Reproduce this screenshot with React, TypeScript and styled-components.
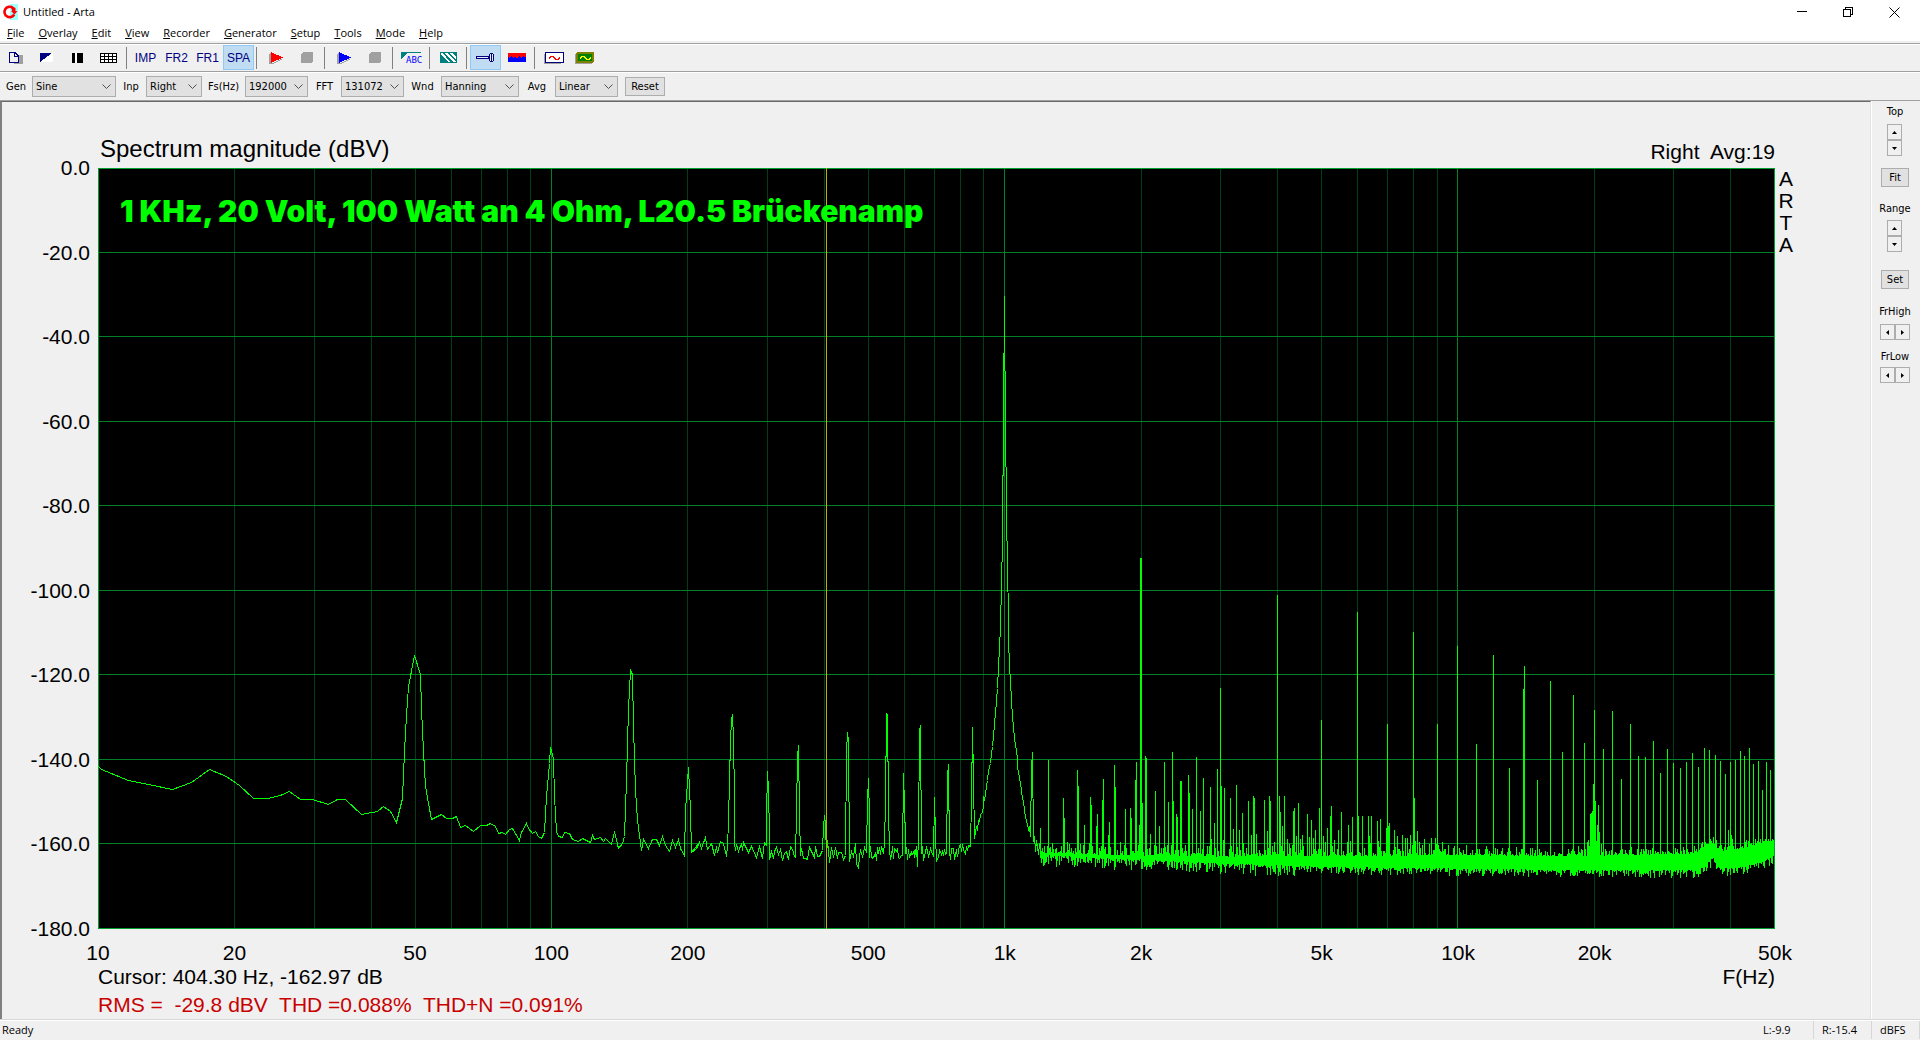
import React from "react";
import styled, { createGlobalStyle } from "styled-components";

const UI = `"Open Sans", "Noto Sans", sans-serif`;
const DIALOG = `"DejaVu Sans Condensed", "DejaVu Sans", sans-serif`;
const PLOT = `"Liberation Sans", Arial, sans-serif`;

const Global = createGlobalStyle`
  *, *::before, *::after { box-sizing: border-box; }
  body { margin: 0; background: #f0f0f0; color: #000; font-family: ${UI}; }
  button, select { font: inherit; color: inherit; margin: 0; padding: 0; }
`;

/* ---------- spectrum data ---------- */

const PLOT_W = 1677;
const PLOT_H = 761;
const DECADES = Math.log10(5000);

type Pt = [number, number];

/* Each range is stored on its own sample grid: origin in plot units, samples per unit. */
const toPlot = (origin: number, perUnit: number) => ([x, y]: Pt): Pt => [
  Math.floor(origin + x / perUnit) + 0.5,
  Math.floor(452 + y / 3) + 0.5,
];

const LOW: Pt[] = [
  [22, 440], [30, 448], [100, 481], [150, 494], [212, 508], [262, 487], [308, 448], [350, 468], [384, 496],
  [420, 535], [456, 535], [490, 525], [512, 514], [540, 538], [572, 538], [612, 553], [637, 538], [657, 538],
  [698, 583], [738, 574], [755, 559], [771, 573], [787, 607], [803, 535], [808, 395], [813, 285], [818, 200],
  [834, 106], [849, 162], [853, 265], [857, 395], [862, 500], [870, 550], [878, 598], [903, 583], [917, 596],
  [932, 596], [942, 589], [953, 622], [965, 616], [985, 635], [1003, 616], [1018, 616], [1029, 610],
  [1041, 620], [1050, 640], [1060, 637], [1069, 643], [1078, 628], [1086, 625], [1104, 661], [1110, 637],
  [1121, 610], [1128, 625], [1136, 640], [1146, 635], [1153, 649], [1161, 655], [1168, 637], [1174, 530],
  [1180, 430], [1184, 382], [1191, 415], [1195, 530], [1199, 635], [1205, 648], [1214, 653], [1219, 637],
  [1232, 640], [1241, 658], [1256, 664], [1267, 655], [1286, 668], [1291, 646], [1297, 658], [1312, 652],
  [1320, 664], [1326, 655], [1339, 674], [1344, 660], [1348, 634], [1358, 685], [1368, 670], [1374, 648],
  [1379, 480], [1384, 265], [1389, 150], [1394, 162], [1398, 320], [1402, 510], [1407, 600], [1412, 645],
  [1417, 691], [1423, 658], [1436, 685], [1446, 658], [1457, 658], [1464, 676], [1471, 649], [1480, 676],
  [1489, 694], [1497, 661], [1505, 682], [1512, 658], [1518, 685], [1528, 706], [1531, 572], [1537, 442],
  [1542, 570], [1547, 697], [1558, 686], [1567, 667],
];

const MID: Pt[][] = [
  [[5, 697], [16, 686], [24, 668], [31, 686], [40, 652], [45, 687], [56, 670], [64, 706], [69, 680], [71, 697],
    [80, 665], [88, 670], [95, 710], [99, 680], [101, 603], [104, 480], [107, 365], [109, 297], [111, 282],
    [113, 355], [115, 530], [117, 667], [120, 692], [122, 673], [127, 694], [134, 670], [137, 690], [140, 668],
    [152, 697], [161, 680], [173, 712], [182, 680], [190, 716], [194, 668], [200, 676], [201, 588], [203, 453],
    [205, 510], [207, 642], [208, 718]],
  [[276, 712], [279, 573], [281, 408], [284, 375], [286, 585], [288, 706]],
  [[346, 690], [349, 620], [352, 585], [354, 612], [357, 705], [360, 660], [365, 728]],
  [[406, 706], [409, 394], [411, 336], [414, 360], [417, 725]],
  [[432, 670], [436, 730], [440, 746], [444, 705]],
  [[461, 697], [464, 537], [466, 474], [468, 588], [469, 713]],
  [[509, 670], [512, 543], [514, 279], [516, 285], [518, 560], [520, 703]],
  [[556, 706], [559, 460], [562, 655], [564, 700]],
  [[594, 740], [598, 642], [600, 333], [603, 315], [605, 700]],
  [[636, 710], [639, 531], [641, 645], [643, 724]],
  [[671, 700], [674, 468], [675, 432], [677, 706]],
  [[733, 678], [736, 540], [738, 321], [740, 478], [743, 655], [748, 620], [751, 632], [755, 600], [757, 604],
    [760, 582], [763, 578], [766, 560], [768, 530], [770, 540], [775, 500], [778, 480], [781, 450], [785, 430],
    [788, 400], [791, 378], [793, 350], [796, 310], [798, 280], [801, 242], [803, 205], [806, 140], [809, 84],
    [811, 15], [814, -105], [817, -240], [819, -620], [821, -970], [823, -896], [826, -321], [829, -156],
    [831, -15], [833, 57], [836, 135], [838, 183], [841, 240], [843, 288], [846, 320], [849, 357], [852, 390],
    [855, 415], [857, 443], [860, 472], [863, 490], [866, 512], [868, 535], [871, 545], [873, 570], [877, 592],
    [880, 600], [884, 628], [887, 618], [890, 648], [892, 444], [894, 398], [897, 664], [899, 650], [903, 694],
    [906, 660], [910, 704], [914, 670], [918, 700]],
];

const SPIKES_A: Pt[] = [
  [916, 625], [937, 422], [976, 534], [978, 594], [1013, 450], [1015, 498], [1031, 615], [1047, 531],
  [1049, 555], [1063, 620], [1065, 582], [1078, 540], [1080, 477], [1094, 645], [1096, 606], [1109, 435],
  [1111, 501],
];

const SPIKES_B: Pt[] = [
  [1, 667], [16, 567], [31, 564], [34, 594], [46, 480], [49, 426], [55, 675], [58, 615], [61, -186], [64, -186],
  [67, 549], [76, 408], [79, 414], [91, 642], [106, 513], [109, 678], [118, 618], [133, 426], [136, 681],
  [145, 546], [157, 396], [160, 543], [169, 582], [172, 591], [181, 483], [184, 483], [205, 465], [208, 519],
  [217, 567], [229, 411], [241, 573], [250, 474], [262, 678], [271, 501], [274, 657], [283, 609], [292, 447],
  [301, 204], [304, 498], [310, 660], [313, 504], [331, 534], [334, 678], [340, 627], [349, 495], [358, 630],
  [367, 579], [370, 669], [385, 543], [394, 645], [400, 528], [403, 534], [409, 642], [433, 540], [442, 633],
  [448, 528], [451, 543], [457, 678], [463, 666], [472, -75], [478, 528], [481, 576], [487, 618], [493, 528],
  [502, 657], [508, 672], [520, 573], [523, 564], [529, 648], [535, 549], [541, 657], [547, 645], [550, 678],
  [562, 582], [568, 651], [574, 600], [580, 654], [586, 630], [598, 564], [604, 300], [610, 648], [616, 666],
  [622, 624], [631, 588], [634, 558], [637, 678], [643, 660], [655, 630], [664, 576], [682, 666], [685, 615],
  [691, 663], [697, 591], [712, -24], [715, 588], [727, 588], [745, 588], [748, 648], [751, 669], [754, 588],
  [772, 603], [775, 663], [778, 681], [781, 597], [799, 624], [802, 312], [805, 618], [808, 609], [823, 630],
  [826, 681], [832, 648], [847, 645], [856, 654], [862, 654], [871, 645], [877, 675], [880, 36], [883, 534],
  [886, 663], [892, 633], [898, 666], [907, 675], [913, 657], [928, 672], [934, 654], [946, 654], [949, 672],
  [952, 312], [955, 675], [967, 666], [985, 675], [1003, 678],
];

const SPIKES_C: Pt[] = [
  [22, 78], [49, 675], [79, 372], [109, 678], [130, 105], [178, 444], [199, 681], [220, 207], [223, 138],
  [262, 480], [301, 183], [337, 396], [370, 225], [385, 678], [403, 369], [412, 668], [415, 660], [418, 678],
  [421, 582], [424, 579], [427, 573], [430, 492], [433, 270], [436, 543], [439, 665], [442, 615], [445, 555],
  [448, 636], [454, 672], [460, 387], [487, 273], [514, 477], [541, 312], [565, 408], [586, 411], [610, 363],
  [631, 459], [652, 387], [670, 429], [691, 444], [709, 426], [727, 399], [745, 441], [763, 384], [778, 390],
  [796, 405], [811, 423], [826, 462], [835, 630], [841, 426], [844, 645], [847, 657], [856, 422], [871, 393],
  [883, 408], [898, 384], [910, 432], [925, 423], [937, 510], [949, 426], [961, 450],
];

/* Noise floor envelope: plot x, upper edge, lower edge. */
const FLOOR: [number, number, number][] = [
  [943, 694, 704], [1000, 700, 714], [1060, 704, 720], [1122, 706, 730], [1222, 705, 740], [1352, 702, 745],
  [1480, 704, 750], [1590, 698, 750], [1599, 694, 750], [1607, 674, 735], [1612, 664, 720], [1615, 664, 713],
  [1618, 676, 725], [1622, 688, 743], [1639, 686, 744], [1662, 668, 728], [1676, 656, 706],
];

function makeRandom(seed: number) {
  let s = seed;
  return () => {
    s = (s * 1664525 + 1013904223) % 4294967296;
    return s / 4294967296;
  };
}

function buildLine(): string {
  const rnd = makeRandom(77);
  const pts: Pt[] = LOW.map(toPlot(-8, 2.57));
  const mid = toPlot(592, 2.613);
  let x = 0;
  let up = false;
  MID.forEach((group) => {
    const step = x < 420 ? 4 : 2;
    for (x += step; x < group[0][0] - 2; x += step + rnd() * 2) {
      const centre = x > 690 ? 700 - (x - 690) / 2 : 700;
      up = rnd() > 0.25 ? !up : up;
      pts.push(mid([x, centre + (up ? -1 : 1) * rnd() * 22]));
    }
    group.forEach((p) => pts.push(mid(p)));
    x = group[group.length - 1][0];
  });
  return pts.map((p) => p.join(",")).join(" ");
}

function buildColumns(): string {
  const rnd = makeRandom(2024);
  const out: string[] = [];
  let k = 0;
  for (let x = 943; x < PLOT_W - 1; x++) {
    while (k < FLOOR.length - 2 && x > FLOOR[k + 1][0]) k++;
    const [x0, t0, b0] = FLOOR[k];
    const [x1, t1, b1] = FLOOR[k + 1];
    const f = (x - x0) / (x1 - x0);
    const spread = x < 1200 ? 34 : 24;
    const top = t0 + (t1 - t0) * f + 4 - Math.pow(rnd(), 2) * spread;
    const bottom = b0 + (b1 - b0) * f + Math.pow(rnd(), 2) * spread;
    out.push(`M${x + 0.5} ${Math.round(452 + top / 3)}V${Math.round(452 + bottom / 3)}`);
  }
  const spike = (origin: number, perUnit: number) => (p: Pt) => {
    const [sx, sy] = toPlot(origin, perUnit)(p);
    out.push(`M${sx} ${sy - 0.5}V690`);
  };
  SPIKES_A.forEach(spike(592, 2.613));
  SPIKES_B.forEach(spike(1022, 3));
  SPIKES_C.forEach(spike(1352, 3));
  return out.join("");
}

const LINE = buildLine();
const COLUMNS = buildColumns();

const freqX = (f: number) => Math.round((Math.log10(f / 10) / DECADES) * (PLOT_W - 1)) + 0.5;
const MAJOR_V = [100, 1000, 10000];
const MINOR_V = [10, 100, 1000, 10000]
  .flatMap((d) => [2, 3, 4, 5, 6, 7, 8, 9].map((m) => d * m))
  .filter((f) => f < 50000);
const LEVELS = [0, -20, -40, -60, -80, -100, -120, -140, -160, -180];
const levelY = (db: number) => Math.floor((-db / 180) * (PLOT_H - 1)) + 0.5;
const TICKS: [number, string][] = [
  [10, "10"], [20, "20"], [50, "50"], [100, "100"], [200, "200"], [500, "500"], [1000, "1k"], [2000, "2k"],
  [5000, "5k"], [10000, "10k"], [20000, "20k"], [50000, "50k"],
];

/* ---------- window frame ---------- */

const Window = styled.div`
  display: flex;
  flex-direction: column;
  min-height: 100vh;
  font-size: 11px;
`;

const TitleBar = styled.header`
  display: flex;
  align-items: center;
  height: 24px;
  padding: 0 3px 0 2px;
  background: #fff;
`;

const TitleText = styled.h1`
  flex: 1;
  margin: 0 0 0 5px;
  font-size: 11px;
  font-weight: 400;
  line-height: 16px;
`;

const WindowButton = styled.button`
  display: grid;
  place-items: center;
  width: 46px;
  height: 20px;
  border: 0;
  background: none;
`;

const MenuBar = styled.nav`
  display: flex;
  height: 19px;
  background: #fff;
  border-bottom: 2px solid #f0f0f0;
`;

const MenuItem = styled.button`
  padding: 0 7px;
  border: 0;
  background: none;
  line-height: 17px;
`;

const Bar = styled.div`
  display: flex;
  align-items: center;
  height: 28px;
  border-top: 1px solid #a0a0a0;
  box-shadow: inset 0 1px 0 #fff;
`;

const ToolButton = styled.button<{ $on?: boolean }>`
  display: grid;
  place-items: center;
  width: 31px;
  height: 25px;
  border: 1px solid ${(p) => (p.$on ? "#90c8f6" : "transparent")};
  background: ${(p) => (p.$on ? "#c0dcf3" : "transparent")};
  color: #000080;
  font-family: ${PLOT};
  font-size: 12px;
`;

const Divider = styled.span`
  width: 2px;
  height: 22px;
  margin: 0 2px;
  border-left: 1px solid #808080;
`;

const SettingsBar = styled(Bar)`
  height: 29px;
  padding-top: 1px;
  font-family: ${DIALOG};
`;

const FieldLabel = styled.label<{ $width: number }>`
  width: ${(p) => p.$width}px;
  text-align: center;
`;

const SelectBox = styled.span<{ $width: number }>`
  display: grid;
  align-items: center;
  width: ${(p) => p.$width}px;
  height: 21px;
  border: 1px solid #adadad;
  background: #e1e1e1;

  select, svg { grid-area: 1 / 1; }
  select {
    appearance: none;
    width: 100%;
    height: 19px;
    padding: 0 0 0 3px;
    border: 0;
    background: none;
  }
  svg { justify-self: end; margin-right: 4px; pointer-events: none; }
`;

const PushButton = styled.button<{ $width: number }>`
  width: ${(p) => p.$width}px;
  height: 19px;
  border: 1px solid #adadad;
  background: #e1e1e1;
  font-family: ${DIALOG};
  line-height: 16px;
`;

const ResetButton = styled(PushButton)`
  margin-left: 7px;
`;

/* ---------- work area ---------- */

const Work = styled.div`
  display: flex;
  flex: 1;
  border-top: 1px solid #a0a0a0;
`;

const Chart = styled.main`
  flex: 1;
  display: grid;
  grid-template-columns: 96px minmax(0, 1fr) 95px;
  grid-template-rows: 66px minmax(0, 1fr) auto;
  border: solid #696969;
  border-width: 1px 0 0 1px;
  border-left: 2px solid #808080;
  border-right: 1px solid #e3e3e3;
  font-family: ${PLOT};
  font-size: 21px;
  line-height: 24px;
`;

const ChartHead = styled.div`
  grid-column: 2;
  display: flex;
  justify-content: space-between;
  align-items: flex-end;
  padding-bottom: 4px;
  white-space: pre;
`;

const ChartTitle = styled.h2`
  margin: 0 0 0 2px;
  font-size: 24px;
  line-height: 30px;
  font-weight: 400;
`;

const Levels = styled.div`
  grid-column: 1;
  grid-row: 2;
  display: flex;
  flex-direction: column;
  justify-content: space-between;
  padding-right: 8px;
  text-align: right;

  span { height: 0; line-height: 0; }
`;

const PlotBox = styled.div`
  grid-column: 2;
  grid-row: 2;
  position: relative;
  background: #000;
`;

const PlotSvg = styled.svg`
  display: block;
  position: absolute;
  inset: 0;
  width: 100%;
  height: 100%;
  fill: none;
  shape-rendering: crispEdges;

  * { vector-effect: non-scaling-stroke; }
`;

const Annotation = styled.div`
  position: absolute;
  left: 22px;
  top: 24px;
  color: #00ff00;
  font-family: Inter, ${PLOT};
  font-size: 30px;
  line-height: 38px;
  font-weight: 900;
  white-space: nowrap;
`;

const Brand = styled.div`
  grid-column: 3;
  grid-row: 2;
  display: flex;
  flex-direction: column;
  align-items: center;
  width: 14px;
  margin-left: 4px;
  line-height: 22px;
`;

const ChartFoot = styled.div`
  grid-column: 2;
  grid-row: 3;
  padding: 12px 0 2px;
`;

const Axis = styled.svg`
  display: block;
  width: 100%;
  height: 24px;
  overflow: visible;
  text-anchor: middle;
`;

const Readout = styled.div<{ $alert?: boolean }>`
  display: flex;
  justify-content: space-between;
  margin-top: ${(p) => (p.$alert ? 4 : 0)}px;
  color: ${(p) => (p.$alert ? "#c80000" : "#000")};
  white-space: pre;
`;

/* ---------- side panel and status ---------- */

const Side = styled.aside`
  display: flex;
  flex-direction: column;
  align-items: center;
  width: 49px;
  padding: 4px 2px 0 0;
  border-left: 1px solid #fff;
  font-family: ${DIALOG};
  line-height: 14px;
`;

const SideGroup = styled.div<{ $gap: number; $after: number }>`
  display: flex;
  flex-direction: column;
  align-items: center;
  gap: ${(p) => p.$gap}px;
  margin-bottom: ${(p) => p.$after}px;
`;

const Spinner = styled.div<{ $row?: boolean }>`
  display: flex;
  flex-direction: ${(p) => (p.$row ? "row" : "column")};
`;

const SpinButton = styled.button`
  display: grid;
  place-items: center;
  width: 15px;
  height: 16px;
  border: 1px solid #adadad;
  background: #f0f0f0;
`;

const StatusBar = styled.footer`
  display: flex;
  align-items: center;
  height: 21px;
  border-top: 1px solid #d7d7d7;
  box-shadow: inset 0 1px 0 #fff;
  line-height: 18px;
`;

const StatusText = styled.span`
  flex: 1;
  padding-left: 2px;
`;

const StatusCell = styled.span<{ $width: number }>`
  width: ${(p) => p.$width}px;
  padding-left: 8px;
  border-right: 1px solid #d7d7d7;
`;

/* ---------- icons ---------- */

const Icon = ({ w, h, children }: { w: number; h: number; children: React.ReactNode }) => (
  <svg width={w} height={h} viewBox={`0 0 ${w} ${h}`} fill="none" shapeRendering="crispEdges" aria-hidden="true">
    {children}
  </svg>
);

const AppIcon = () => (
  <svg width="16" height="16" viewBox="0 0 16 16" fill="none" aria-hidden="true">
    <rect x="8" width="8" height="16" fill="#a0ffff" />
    <path d="M10.5 3.6A5.2 5.2 0 1 0 12.2 10.5" stroke="#f00" strokeWidth="2.6" />
    <path d="M9 7H15.5L12.5 10.5Z M9 1.5L13.5 4V7H10Z" fill="#f00" />
  </svg>
);

const NewIcon = () => (
  <Icon w={14} h={12}>
    <path d="M5 3H14V12H5Z" fill="#a0a0a0" />
    <path d="M0.5 0.5H6L9.5 4V10.5H0.5Z" fill="#f0f0f0" stroke="#000080" />
    <path d="M5.5 0.5V4.5H9.5" stroke="#000080" />
  </Icon>
);
const OverlayIcon = () => (
  <Icon w={13} h={9}>
    <path d="M13 0V9H0Z" fill="#fff" />
    <path d="M0 0H12L0 9Z" fill="#000080" />
  </Icon>
);
const PauseIcon = () => (
  <Icon w={11} h={10}>
    <path d="M0 0H3V10H0Z M5 0H11V10H5Z" fill="#000" />
    <path d="M3 0H5V10H3Z" fill="#fff" />
  </Icon>
);
const GridIcon = () => (
  <Icon w={17} h={10}>
    <path d="M0 0H17V10H0Z" fill="#fff" />
    <path d="M0.5 0.5H16.5V9.5H0.5ZM0 3.5H17M0 6.5H17M4.5 0V10M8.5 0V10M12.5 0V10" stroke="#000" />
  </Icon>
);
const PlayIcon = ({ color }: { color: string }) => (
  <Icon w={14} h={12}>
    <path d="M0 2L3 0V12H0Z M2 12L12 7L14 7L4 12Z" fill="#a0a0a0" />
    <path d="M2 0L14 5.5L2 11Z" fill={color} />
  </Icon>
);
const StopIcon = () => (
  <Icon w={12} h={11}>
    <path d="M2 0H12V9L10 11H0V2Z" fill="#a0a0a0" />
  </Icon>
);
const AbcIcon = () => (
  <svg width="21" height="12" viewBox="0 0 21 12" aria-hidden="true">
    <path d="M0 0H20V1H6L0 7Z" fill="#008080" shapeRendering="crispEdges" />
    <text x="5" y="11" fill="#0000ff" fontFamily="DejaVu Sans Mono, monospace" fontSize="9">ABC</text>
  </svg>
);
const HatchIcon = () => (
  <Icon w={17} h={11}>
    <path d="M0 0H17V11H0Z" fill="#fff" />
    <path d="M0 0.5H17M0 10.5H17M0.5 0V11M16.5 0V11" stroke="#008080" />
    <path d="M0 2L9 11H0Z M2 0H4L14 11H11Z M7 0H9L17 9V11Z M12 0H17V6Z" fill="#008080" />
  </Icon>
);
const PinIcon = () => (
  <Icon w={19} h={9}>
    <path d="M0.5 3.5H12.5V5.5H0.5Z M13.5 1.5L14.5 0.5H16.5L17.5 1.5V7.5L16.5 8.5H14.5L13.5 7.5Z" fill="#e8e8f0" stroke="#000080" />
    <path d="M15.5 1V8" stroke="#000080" />
  </Icon>
);
const SpectrumIcon = () => (
  <Icon w={18} h={9}>
    <path d="M0 0H18V9H0Z" fill="#0000ff" />
    <path d="M0 0H18V3L17 5L15 3L13 5L11 3L9 6L7 3L5 5L3 3L1 5L0 4Z" fill="#f00" />
  </Icon>
);
const ScopeIcon = ({ dark }: { dark?: boolean }) => (
  <Icon w={20} h={12}>
    <path d="M0.5 2V11.5H17" stroke="#a0a0a0" />
    <rect
      x={dark ? 2 : 1.5}
      y={dark ? 1 : 0.5}
      width={dark ? 16 : 18}
      height={dark ? 9 : 10}
      rx="1"
      fill={dark ? "#008000" : "#fff"}
      stroke={dark ? "#808000" : "#000080"}
      strokeWidth={dark ? 2 : 1}
    />
    <path d="M5 6.5L7 4.5H9L12 7.5H14L16 5.5" stroke={dark ? "#ffff00" : "#f00"} />
  </Icon>
);
const Chevron = () => (
  <svg width="9" height="6" viewBox="0 0 9 6" fill="none" aria-hidden="true">
    <path d="M0.5 0.5L4.5 4.5L8.5 0.5" stroke="#505050" />
  </svg>
);

const ARROWS = {
  up: "M0 4L2.5 1L5 4Z",
  down: "M0 1L2.5 4L5 1Z",
  left: "M4 0L1 2.5L4 5Z",
  right: "M1 0L4 2.5L1 5Z",
};
const Arrow = ({ dir }: { dir: keyof typeof ARROWS }) => (
  <svg width="5" height="5" viewBox="0 0 5 5" aria-hidden="true">
    <path d={ARROWS[dir]} />
  </svg>
);

/* ---------- page ---------- */

const MENUS = ["File", "Overlay", "Edit", "View", "Recorder", "Generator", "Setup", "Tools", "Mode", "Help"];

const TOOLS: { name: string; icon?: React.ReactNode; on?: boolean; divider?: boolean }[] = [
  { name: "New", icon: <NewIcon /> },
  { name: "Overlay", icon: <OverlayIcon /> },
  { name: "Pause", icon: <PauseIcon /> },
  { name: "Grid", icon: <GridIcon />, divider: true },
  { name: "IMP" },
  { name: "FR2" },
  { name: "FR1" },
  { name: "SPA", on: true, divider: true },
  { name: "Record", icon: <PlayIcon color="#f00" /> },
  { name: "Stop", icon: <StopIcon />, divider: true },
  { name: "Generate", icon: <PlayIcon color="#00f" /> },
  { name: "Stop generator", icon: <StopIcon />, divider: true },
  { name: "Label", icon: <AbcIcon />, divider: true },
  { name: "Colors", icon: <HatchIcon />, divider: true },
  { name: "Setup", icon: <PinIcon />, on: true },
  { name: "Spectrum", icon: <SpectrumIcon />, divider: true },
  { name: "Signal", icon: <ScopeIcon /> },
  { name: "Scope", icon: <ScopeIcon dark /> },
];

const FIELDS: { label: string; value: string; labelWidth: number; width: number }[] = [
  { label: "Gen", value: "Sine", labelWidth: 32, width: 84 },
  { label: "Inp", value: "Right", labelWidth: 30, width: 56 },
  { label: "Fs(Hz)", value: "192000", labelWidth: 43, width: 63 },
  { label: "FFT", value: "131072", labelWidth: 33, width: 63 },
  { label: "Wnd", value: "Hanning", labelWidth: 37, width: 78 },
  { label: "Avg", value: "Linear", labelWidth: 36, width: 63 },
];

export default function App() {
  return (
    <Window>
      <Global />
      <TitleBar>
        <AppIcon />
        <TitleText>Untitled - Arta</TitleText>
        <WindowButton aria-label="Minimize">
          <Icon w={10} h={10}><path d="M0 4.5H10" stroke="#000" /></Icon>
        </WindowButton>
        <WindowButton aria-label="Restore">
          <Icon w={10} h={10}><path d="M0.5 2.5H7.5V9.5H0.5Z M2.5 2V0.5H9.5V7.5H8" stroke="#000" /></Icon>
        </WindowButton>
        <WindowButton aria-label="Close">
          <svg width="11" height="11" viewBox="0 0 11 11" aria-hidden="true"><path d="M0.5 0.5L10.5 10.5M10.5 0.5L0.5 10.5" stroke="#000" /></svg>
        </WindowButton>
      </TitleBar>

      <MenuBar>
        {MENUS.map((m) => (
          <MenuItem key={m}><u>{m[0]}</u>{m.slice(1)}</MenuItem>
        ))}
      </MenuBar>

      <Bar>
        {TOOLS.map((t) => (
          <React.Fragment key={t.name}>
            <ToolButton $on={t.on} aria-label={t.name}>{t.icon ?? t.name}</ToolButton>
            {t.divider && <Divider />}
          </React.Fragment>
        ))}
      </Bar>

      <SettingsBar>
        {FIELDS.map((f) => (
          <React.Fragment key={f.label}>
            <FieldLabel htmlFor={f.label} $width={f.labelWidth}>{f.label}</FieldLabel>
            <SelectBox $width={f.width}>
              <select id={f.label} defaultValue={f.value}><option>{f.value}</option></select>
              <Chevron />
            </SelectBox>
          </React.Fragment>
        ))}
        <ResetButton $width={40}>Reset</ResetButton>
      </SettingsBar>

      <Work>
        <Chart>
          <ChartHead>
            <ChartTitle>Spectrum magnitude (dBV)</ChartTitle>
            <span>{"Right  Avg:19"}</span>
          </ChartHead>
          <Levels>
            {LEVELS.map((l) => <span key={l}>{l.toFixed(1)}</span>)}
          </Levels>
          <PlotBox>
            <PlotSvg viewBox={`0 0 ${PLOT_W} ${PLOT_H}`} preserveAspectRatio="none">
              {MINOR_V.map((f) => <path key={f} d={`M${freqX(f)} 0V${PLOT_H}`} stroke="#004018" />)}
              {MAJOR_V.map((f) => <path key={f} d={`M${freqX(f)} 0V${PLOT_H}`} stroke="#008028" />)}
              {LEVELS.map((l) => <path key={l} d={`M0 ${levelY(l)}H${PLOT_W}`} stroke="#008028" />)}
              <path d={`M0.5 0.5H${PLOT_W - 0.5}V${PLOT_H - 0.5}H0.5Z`} stroke="#00a030" />
              <polyline points={LINE} stroke="#00ff00" />
              <path d={COLUMNS} stroke="#00ff00" />
              <path d={`M${freqX(404.3)} 0V${PLOT_H}`} stroke="#c0b000" />
            </PlotSvg>
            <Annotation>1 KHz, 20 Volt, 100 Watt an 4 Ohm, L20.5 Brückenamp</Annotation>
          </PlotBox>
          <Brand>
            <span>A</span><span>R</span><span>T</span><span>A</span>
          </Brand>
          <ChartFoot>
            <Axis>
              {TICKS.map(([f, t]) => (
                <text key={t} x={`${(Math.log10(f / 10) / DECADES) * 100}%`} y="19">{t}</text>
              ))}
            </Axis>
            <Readout><span>Cursor: 404.30 Hz, -162.97 dB</span><span>F(Hz)</span></Readout>
            <Readout $alert>{"RMS =  -29.8 dBV  THD =0.088%  THD+N =0.091%"}</Readout>
          </ChartFoot>
        </Chart>

        <Side>
          <SideGroup $gap={5} $after={12}>
            Top
            <Spinner>
              <SpinButton aria-label="Top up"><Arrow dir="up" /></SpinButton>
              <SpinButton aria-label="Top down"><Arrow dir="down" /></SpinButton>
            </Spinner>
          </SideGroup>
          <SideGroup $gap={0} $after={15}>
            <PushButton $width={28}>Fit</PushButton>
          </SideGroup>
          <SideGroup $gap={4} $after={18}>
            Range
            <Spinner>
              <SpinButton aria-label="Range up"><Arrow dir="up" /></SpinButton>
              <SpinButton aria-label="Range down"><Arrow dir="down" /></SpinButton>
            </Spinner>
          </SideGroup>
          <SideGroup $gap={0} $after={16}>
            <PushButton $width={28}>Set</PushButton>
          </SideGroup>
          <SideGroup $gap={5} $after={10}>
            FrHigh
            <Spinner $row>
              <SpinButton aria-label="Highest frequency down"><Arrow dir="left" /></SpinButton>
              <SpinButton aria-label="Highest frequency up"><Arrow dir="right" /></SpinButton>
            </Spinner>
          </SideGroup>
          <SideGroup $gap={3} $after={0}>
            FrLow
            <Spinner $row>
              <SpinButton aria-label="Lowest frequency down"><Arrow dir="left" /></SpinButton>
              <SpinButton aria-label="Lowest frequency up"><Arrow dir="right" /></SpinButton>
            </Spinner>
          </SideGroup>
        </Side>
      </Work>

      <StatusBar>
        <StatusText>Ready</StatusText>
        <StatusCell $width={59}>L:-9.9</StatusCell>
        <StatusCell $width={58}>R:-15.4</StatusCell>
        <StatusCell $width={48}>dBFS</StatusCell>
      </StatusBar>
    </Window>
  );
}
